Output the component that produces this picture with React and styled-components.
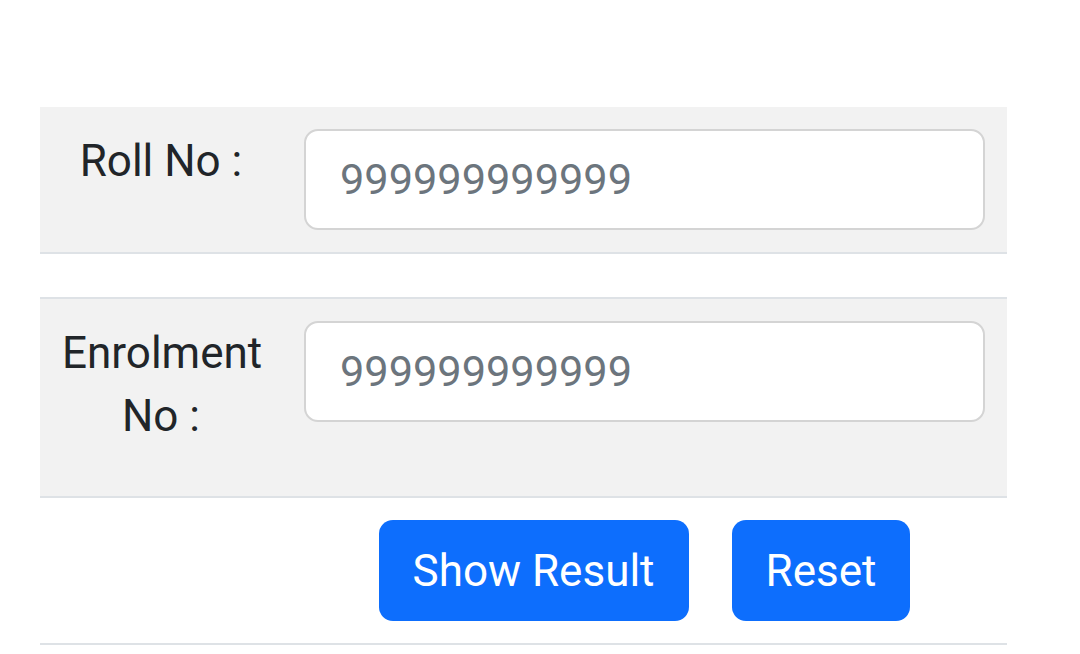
import React from 'react'
import styled, { createGlobalStyle } from 'styled-components'

const GlobalStyle = createGlobalStyle`
  body {
    margin: 0;
    background: #ffffff;
    font-family: 'Roboto', 'Liberation Sans', sans-serif;
  }
`

const Page = styled.div`
  padding: 107px 0 0 40px;
`

const Table = styled.div`
  width: 967px;
`

const Row = styled.div`
  display: grid;
  grid-template-columns: 242px 1fr;
  background: ${(p) => (p.$striped ? '#f2f2f2' : '#ffffff')};
  border-bottom: 2px solid #dee2e6;
  min-height: ${(p) => p.$height || 0}px;
  box-sizing: border-box;
`

const Cell = styled.div`
  padding: 22px;
  display: flex;
  flex-direction: column;
  justify-content: flex-start;
`

const Label = styled.label`
  display: block;
  font-size: 44px;
  line-height: 63px;
  color: #212529;
  text-align: center;
  margin: 1px 0 26px;
`

const Input = styled.input`
  box-sizing: border-box;
  width: 100%;
  height: 101px;
  padding: 0 34px;
  font-family: 'Roboto', 'Liberation Sans', sans-serif;
  font-size: 43.3px;
  color: #212529;
  background: #ffffff;
  border: 2px solid #d4d4d4;
  border-radius: 14px;
  outline: none;

  &::placeholder {
    color: #6c757d;
    opacity: 1;
  }
`

const Actions = styled.div`
  display: flex;
  justify-content: center;
  gap: 43px;
`

const Button = styled.button`
  height: 101px;
  padding: 0 34px;
  background: #0d6efd;
  color: #ffffff;
  border: none;
  border-radius: 14px;
  font-family: 'Roboto', 'Liberation Sans', sans-serif;
  font-size: 44px;
  cursor: pointer;
`

const App = () => (
  <Page>
    <GlobalStyle />
    <Table>
      <Row $striped>
        <Cell>
          <Label htmlFor="roll">Roll No :</Label>
        </Cell>
        <Cell>
          <Input id="roll" placeholder="999999999999" />
        </Cell>
      </Row>
      <Row $height={45} />
      <Row $striped>
        <Cell>
          <Label htmlFor="enrol">Enrolment No :</Label>
        </Cell>
        <Cell>
          <Input id="enrol" placeholder="999999999999" />
        </Cell>
      </Row>
      <Row>
        <Cell />
        <Cell>
          <Actions>
            <Button>Show Result</Button>
            <Button>Reset</Button>
          </Actions>
        </Cell>
      </Row>
    </Table>
  </Page>
)

export default App
